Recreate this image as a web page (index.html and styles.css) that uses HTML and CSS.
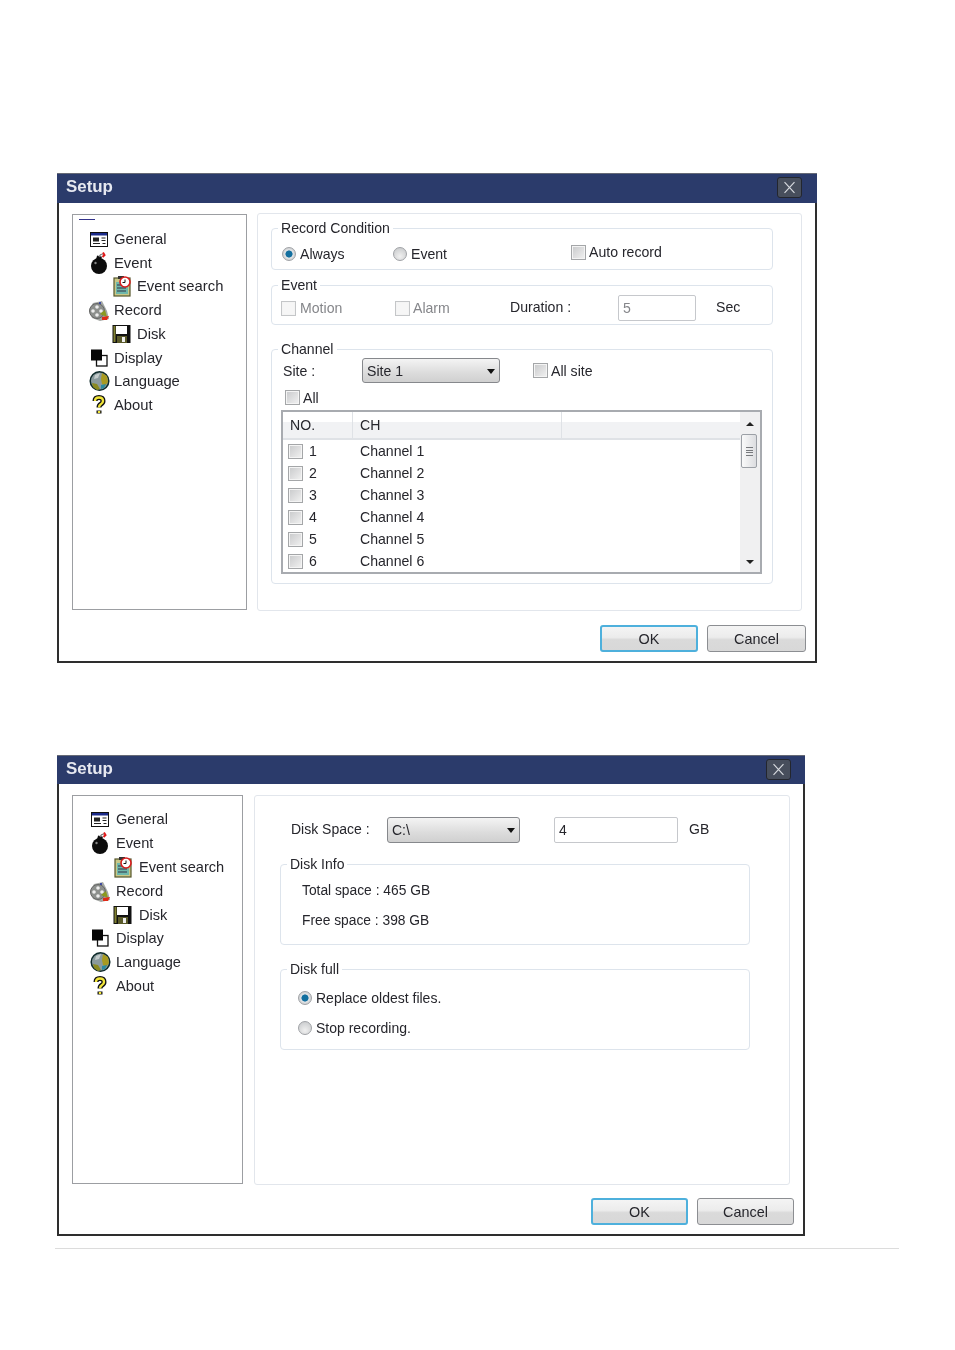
FILE: index.html
```html
<!DOCTYPE html>
<html lang="en">
<head>
<meta charset="utf-8">
<title>Setup</title>
<link rel="stylesheet" href="styles.css">
</head>
<body>
<svg class="defs" aria-hidden="true">
  <symbol id="i-general" viewBox="0 0 24 24">
    <rect x="3.5" y="5.5" width="17" height="14" fill="#fff" stroke="#111"/>
    <rect x="4" y="6" width="16" height="2.5" fill="#1a2a8a"/>
    <rect x="6" y="10.5" width="6" height="4" fill="#222"/>
    <path d="M6 16.5h7M14.5 11h4M14.5 13.5h4M15.5 16.5h3" stroke="#222" fill="none"/>
  </symbol>
  <symbol id="i-bomb" viewBox="0 0 24 24">
    <circle cx="12" cy="15" r="8" fill="#0c0c0c"/>
    <rect x="9.5" y="5" width="5" height="4" fill="#0c0c0c" transform="rotate(15 12 7)"/>
    <path d="M12 6q1-3 4-3" stroke="#777" stroke-width="1.2" fill="none"/>
    <path d="M16 1.5l1.5 2.5-2 2" stroke="#e01818" stroke-width="2" fill="none"/>
    <circle cx="8.5" cy="12" r="1.2" fill="#888"/>
  </symbol>
  <symbol id="i-search" viewBox="0 0 24 24">
    <rect x="4" y="4" width="16" height="18" fill="#c8c888" stroke="#55552a" stroke-width="1.2"/>
    <rect x="6" y="8" width="12" height="12" fill="#6fb8ac"/>
    <path d="M7 11h6M7 14h9M7 17h9" stroke="#334" fill="none"/>
    <rect x="8" y="2" width="6" height="3" fill="#333"/>
    <circle cx="15" cy="8" r="5" fill="#fff" stroke="#d81c1c" stroke-width="1.6"/>
    <path d="M15 5.5V8.5h-2.5" stroke="#111" fill="none"/>
  </symbol>
  <symbol id="i-record" viewBox="0 0 24 24">
    <path d="M6 5l9-2 5 10 2 8-9 2-8-3-3-8z" fill="#a4a8a4"/>
    <circle cx="10" cy="13" r="7.5" fill="#8d908d" stroke="#666"/>
    <circle cx="10" cy="9" r="1.8" fill="#eee"/>
    <circle cx="6" cy="13" r="1.8" fill="#eee"/>
    <circle cx="14" cy="13" r="1.8" fill="#eee"/>
    <circle cx="10" cy="17" r="1.8" fill="#eee"/>
    <circle cx="13" cy="5" r="1" fill="#2030a0"/>
    <path d="M13 16l5-4 2 7z" fill="#8a9a20"/>
    <path d="M15 19l7-1-2 4-5 0z" fill="#e02a18"/>
  </symbol>
  <symbol id="i-disk" viewBox="0 0 24 24">
    <rect x="2.5" y="3" width="18" height="18" fill="#111"/>
    <path d="M3.5 4h2v16h-2z" fill="#808030"/>
    <rect x="6" y="4" width="11" height="8" fill="#fff"/>
    <rect x="7" y="14" width="10" height="7" fill="#5a5a2a"/>
    <rect x="12" y="15" width="3" height="5" fill="#eee"/>
  </symbol>
  <symbol id="i-display" viewBox="0 0 24 24">
    <rect x="9.5" y="9.5" width="10.5" height="10.5" fill="#fff" stroke="#111" stroke-width="1.3"/>
    <rect x="4" y="3.5" width="11" height="11" fill="#060606"/>
  </symbol>
  <symbol id="i-language" viewBox="0 0 24 24">
    <circle cx="12.500" cy="12" r="9.300" fill="#8a9a9c" stroke="#0e2a2a" stroke-width="1.500"/>
    <path d="M15 4l5 3 1 6-3 4-3-2-1-5z" fill="#a89a20"/>
    <path d="M5 14l5 1 3 5-3 1-4-3z" fill="#8a8a20"/>
    <path d="M14 16l5-1-2 4-3 1z" fill="#2a8aa0"/>
    <path d="M8 6l5-2-2 5-4 1z" fill="#c4cccc"/>
  </symbol>
  <symbol id="i-about" viewBox="0 0 24 24">
    <path d="M8 8q0-3.500 4-3.500t4 3.500q0 2-2.200 3.200-1.800 1-1.800 3.300" fill="none" stroke="#111" stroke-width="5"/>
    <path d="M12 17.500v3" fill="none" stroke="#111" stroke-width="5"/>
    <path d="M8 8q0-3.500 4-3.500t4 3.500q0 2-2.200 3.200-1.800 1-1.800 3.300" fill="none" stroke="#f2e63a" stroke-width="2.400"/>
    <path d="M12 18v2" fill="none" stroke="#f2e63a" stroke-width="2.400"/>
  </symbol>
  <symbol id="i-close" viewBox="0 0 25 21">
    <path d="M7 4.500l11 12M18 4.500l-11 12" stroke="#d6d9de" stroke-width="1.300" fill="none"/>
  </symbol>
</svg>

<section class="win win-a">
  <header class="win-title">
    <h1 class="win-name">Setup</h1>
    <button class="win-close" type="button" aria-label="Close"><svg class="close-icon"><use href="#i-close"/></svg></button>
  </header>
  <div class="win-body">
    <div class="win-columns">
      <nav class="tree tree-a">
        <div class="tree-mark"></div>
        <div class="tree-row"><svg class="tree-icon"><use href="#i-general"/></svg>General</div>
        <div class="tree-row"><svg class="tree-icon"><use href="#i-bomb"/></svg>Event</div>
        <div class="tree-row tree-child"><svg class="tree-icon"><use href="#i-search"/></svg>Event search</div>
        <div class="tree-row"><svg class="tree-icon"><use href="#i-record"/></svg>Record</div>
        <div class="tree-row tree-child"><svg class="tree-icon"><use href="#i-disk"/></svg>Disk</div>
        <div class="tree-row"><svg class="tree-icon"><use href="#i-display"/></svg>Display</div>
        <div class="tree-row"><svg class="tree-icon"><use href="#i-language"/></svg>Language</div>
        <div class="tree-row"><svg class="tree-icon"><use href="#i-about"/></svg>About</div>
      </nav>
      <main class="panel panel-a">
        <fieldset class="group group-cond">
          <legend class="group-label">Record Condition</legend>
          <div class="opt-row">
            <label class="opt opt-always"><input class="radio" type="radio" name="cond" checked>Always</label>
            <label class="opt opt-event"><input class="radio" type="radio" name="cond">Event</label>
            <label class="opt opt-auto"><input class="check" type="checkbox">Auto record</label>
          </div>
        </fieldset>
        <fieldset class="group group-event">
          <legend class="group-label">Event</legend>
          <div class="opt-row">
            <label class="opt opt-motion muted"><input class="check check-off" type="checkbox" disabled>Motion</label>
            <label class="opt opt-alarm muted"><input class="check check-off" type="checkbox" disabled>Alarm</label>
            <span class="duration-label">Duration :</span>
            <input class="field field-duration" type="text" value="5" disabled>
            <span class="sec-label">Sec</span>
          </div>
        </fieldset>
        <fieldset class="group group-channel">
          <legend class="group-label">Channel</legend>
          <div class="site-row">
            <span class="site-label">Site :</span>
            <div class="select select-site">Site 1</div>
            <label class="opt opt-allsite"><input class="check" type="checkbox">All site</label>
          </div>
          <label class="opt opt-all"><input class="check" type="checkbox">All</label>
          <div class="table">
            <div class="table-main">
              <div class="table-head">
                <div class="head-no">NO.</div>
                <div class="head-ch">CH</div>
                <div class="head-rest"></div>
              </div>
              <div class="table-row"><label class="cell-no"><input class="check" type="checkbox">1</label><div class="cell-ch">Channel 1</div></div>
              <div class="table-row"><label class="cell-no"><input class="check" type="checkbox">2</label><div class="cell-ch">Channel 2</div></div>
              <div class="table-row"><label class="cell-no"><input class="check" type="checkbox">3</label><div class="cell-ch">Channel 3</div></div>
              <div class="table-row"><label class="cell-no"><input class="check" type="checkbox">4</label><div class="cell-ch">Channel 4</div></div>
              <div class="table-row"><label class="cell-no"><input class="check" type="checkbox">5</label><div class="cell-ch">Channel 5</div></div>
              <div class="table-row"><label class="cell-no"><input class="check" type="checkbox">6</label><div class="cell-ch">Channel 6</div></div>
            </div>
            <div class="scroll">
              <div class="scroll-btn"><span class="arrow-up"></span></div>
              <div class="scroll-thumb"><span class="grip"></span></div>
              <div class="scroll-track"></div>
              <div class="scroll-btn scroll-btn-end"><span class="arrow-down"></span></div>
            </div>
          </div>
        </fieldset>
      </main>
    </div>
    <footer class="win-foot">
      <button class="btn btn-primary btn-a" type="button">OK</button>
      <button class="btn btn-a btn-a-wide" type="button">Cancel</button>
    </footer>
  </div>
</section>

<section class="win win-b">
  <header class="win-title">
    <h1 class="win-name">Setup</h1>
    <button class="win-close" type="button" aria-label="Close"><svg class="close-icon"><use href="#i-close"/></svg></button>
  </header>
  <div class="win-body">
    <div class="win-columns">
      <nav class="tree tree-b">
        <div class="tree-row"><svg class="tree-icon"><use href="#i-general"/></svg>General</div>
        <div class="tree-row"><svg class="tree-icon"><use href="#i-bomb"/></svg>Event</div>
        <div class="tree-row tree-child"><svg class="tree-icon"><use href="#i-search"/></svg>Event search</div>
        <div class="tree-row"><svg class="tree-icon"><use href="#i-record"/></svg>Record</div>
        <div class="tree-row tree-child"><svg class="tree-icon"><use href="#i-disk"/></svg>Disk</div>
        <div class="tree-row"><svg class="tree-icon"><use href="#i-display"/></svg>Display</div>
        <div class="tree-row"><svg class="tree-icon"><use href="#i-language"/></svg>Language</div>
        <div class="tree-row"><svg class="tree-icon"><use href="#i-about"/></svg>About</div>
      </nav>
      <main class="panel panel-b">
        <div class="disk-row">
          <span class="disk-label">Disk Space :</span>
          <div class="select select-disk">C:\</div>
          <input class="field field-size" type="text" value="4">
          <span class="gb-label">GB</span>
        </div>
        <fieldset class="group group-info">
          <legend class="group-label">Disk Info</legend>
          <div class="info-line">Total space : 465 GB</div>
          <div class="info-line">Free space : 398 GB</div>
        </fieldset>
        <fieldset class="group group-full">
          <legend class="group-label">Disk full</legend>
          <label class="opt opt-full"><input class="radio" type="radio" name="full" checked>Replace oldest files.</label>
          <label class="opt opt-full"><input class="radio" type="radio" name="full">Stop recording.</label>
        </fieldset>
      </main>
    </div>
    <footer class="win-foot">
      <button class="btn btn-primary btn-b" type="button">OK</button>
      <button class="btn btn-b" type="button">Cancel</button>
    </footer>
  </div>
</section>

<div class="page-rule"></div>
</body>
</html>
```
FILE: styles.css
```css
* { box-sizing: border-box; }
html, body { margin: 0; padding: 0; background: #fff; }
body {
  padding-top: 173px;
  font-family: "Liberation Sans", Arial, sans-serif;
  font-size: 14.1px;
  color: #26262c;
}
.defs { position: absolute; width: 0; height: 0; }

/* window */
.win { margin-left: 57px; filter: blur(0.3px); }
.win-a { width: 760px; height: 490px; }
.win-b { width: 748px; height: 481px; margin-top: 92px; font-size: 14px; }
.win-title {
  display: flex;
  align-items: center;
  justify-content: space-between;
  padding: 0 15px 0 9px;
  background: #2b3b6b;
  border-top: 1px solid #666a76;
}
.win-a .win-title { height: 30px; }
.win-b .win-title { height: 29px; padding-right: 14px; }
.win-name { margin: -2px 0 0; font-size: 16.9px; line-height: 1; font-weight: bold; color: #e6e8f0; }
.win-close {
  width: 25px;
  height: 21px;
  margin-top: -2px;
  padding: 0;
  border: 1px solid #23262e;
  border-radius: 3px;
  background: #474e5c;
}
.close-icon { display: block; width: 23px; height: 19px; }
.win-body {
  border: solid #2e2e2e;
  border-width: 0 2px 2px;
  padding: 10px 13px 9px;
  background: #fff;
}
.win-a .win-body { height: 460px; }
.win-b .win-body { height: 452px; padding-top: 11px; }
.win-columns { display: flex; align-items: flex-start; }
.win-foot { display: flex; justify-content: flex-end; gap: 9px; margin-right: -4px; }
.win-a .win-foot { margin-top: 14px; }
.win-b .win-foot { margin-top: 13px; }

/* tree */
.tree { flex: none; border: 1px solid #9c9ea2; font-size: 14.8px; background: #fff; }
.tree-a { width: 175px; height: 396px; margin-top: 1px; margin-right: 10px; padding-top: 4px; }
.tree-b { width: 171px; height: 389px; margin-right: 11px; padding-top: 11px; font-size: 14.6px; }
.tree-mark { width: 16px; height: 1px; margin: 0 0 7px 6px; background: #33338a; }
.tree-row { display: flex; align-items: center; gap: 3px; height: 23.75px; padding-left: 14px; white-space: nowrap; }
.tree-b .tree-row { padding-left: 15px; height: 23.9px; gap: 4px; }
.tree-child { margin-left: 23px; }
.tree-icon { flex: none; display: block; width: 24px; height: 24px; }

/* panel */
.panel { flex: none; border: 1px solid #e2e6ec; border-radius: 3px; background: #fff; }
.panel-a { width: 545px; height: 398px; padding: 6px 0 0 13px; }
.panel-b { width: 536px; height: 390px; padding: 21px 0 0 25px; }

/* groups */
.group {
  margin: 0;
  padding: 0 6px;
  min-width: 0;
  border: 1px solid #dde4ec;
  border-radius: 4px;
}
.group-label { padding: 0 3px; line-height: 16px; }
.group-cond, .group-event, .group-channel { width: 502px; }
.group-cond { height: 50px; }
.group-event { height: 48px; margin-top: 7px; }
.group-event .opt-row { margin-top: -1px; }
.group-channel { height: 243px; margin-top: 16px; }
.group-info, .group-full { width: 470px; }
.group-info { height: 89px; margin-top: 13px; padding-top: 4px; }
.group-full { height: 89px; margin-top: 16px; padding-top: 6px; }

/* options */
.opt-row { display: flex; align-items: center; height: 32px; }
.opt { display: flex; align-items: center; gap: 4px; white-space: nowrap; }
.muted { color: #85868a; }
.opt-always { width: 111px; margin: 4px 0 0 4px; }
.opt-event { width: 178px; margin-top: 4px; }
.opt-auto { gap: 3px; }
.opt-motion { width: 114px; margin-left: 3px; }
.opt-alarm { width: 115px; gap: 3px; }
.duration-label { width: 108px; margin-top: -2px; }
.field {
  height: 26px;
  padding: 0 4px;
  border: 1px solid #c6c8cc;
  border-radius: 2px;
  font: inherit;
  color: #26262c;
  background: #fff;
}
.field-duration { width: 78px; color: #85868a; }
.sec-label { margin: -2px 0 0 20px; }
.radio, .check { flex: none; appearance: none; -webkit-appearance: none; margin: 0; }
.radio {
  width: 14px;
  height: 14px;
  border: 1px solid #a0a2a6;
  border-radius: 50%;
  background: radial-gradient(circle at 50% 70%, #f0f0f0, #c4c6c8);
}
.radio:checked { background: radial-gradient(circle, #136f9f 0, #136f9f 3.2px, #e4e6e8 3.9px, #b4b6b8 100%); }
.check {
  width: 15px;
  height: 15px;
  border: 1px solid #a4a6a8;
  background: linear-gradient(135deg, #c8c9cb, #f2f2f2);
  box-shadow: inset 0 0 0 1px #f4f4f4;
}
.check-off { background: #f6f6f6; border-color: #c4c6c8; }

/* channel */
.site-row { display: flex; align-items: center; height: 27px; }
.site-label { width: 79px; margin-left: 5px; }
.select {
  position: relative;
  height: 26px;
  padding-left: 4px;
  line-height: 24px;
  border: 1px solid #86888c;
  border-radius: 3px;
  background: linear-gradient(#f4f4f4, #dcdcdc 60%, #d0d0d0);
}
.select::after {
  content: "";
  position: absolute;
  right: 4px;
  top: 10px;
  border: solid transparent;
  border-width: 5px 4.500px 0;
  border-top-color: #111;
}
.select-site { width: 138px; height: 25px; }
.opt-allsite { margin-left: 33px; gap: 3px; }
.opt-all { margin: 5px 0 0 7px; height: 17px; gap: 3px; }
.table {
  display: flex;
  width: 481px;
  height: 164px;
  margin: 4px 0 0 3px;
  border: 2px solid #a8abb0;
  overflow: hidden;
}
.table-main { flex: 1; min-width: 0; }
.table-head {
  display: flex;
  height: 28px;
  line-height: 26px;
  border-bottom: 2px solid #dfe2e6;
  background: linear-gradient(#fff 40%, #f1f2f4 40%);
}
.head-no { width: 70px; padding-left: 7px; border-right: 1px solid #dfe2e6; }
.head-ch { width: 209px; padding-left: 7px; border-right: 1px solid #dfe2e6; }
.head-rest { flex: 1; }
.table-row { display: flex; align-items: center; height: 22px; }
.cell-no { display: flex; align-items: center; gap: 6px; width: 69px; padding-left: 5px; }
.cell-ch { padding-left: 8px; }
.scroll { display: flex; flex-direction: column; flex: none; width: 20px; background: #f0f0f1; }
.scroll-btn { display: flex; align-items: center; justify-content: center; height: 22px; padding-top: 2px; }
.scroll-btn-end { height: 20px; padding-top: 0; }
.arrow-up, .arrow-down { border: solid transparent; border-width: 0 4px; }
.arrow-up { border-bottom: 4px solid #222; }
.arrow-down { border-top: 4px solid #222; border-width: 4px 4px 0; }
.scroll-thumb {
  display: flex;
  align-items: center;
  justify-content: center;
  width: 16px;
  height: 34px;
  margin-left: 1px;
  border: 1px solid #9ca0a6;
  border-radius: 2px;
  background: linear-gradient(90deg, #fafafa, #dcdde0);
}
.grip {
  width: 7px;
  height: 9px;
  background: repeating-linear-gradient(#77797d 0 1px, transparent 1px 2.600px);
}
.scroll-track { flex: 1; }

/* disk */
.disk-row { display: flex; align-items: center; height: 26px; padding-left: 11px; }
.disk-label { width: 96px; margin-top: -2px; }
.select-disk { width: 133px; }
.field-size { width: 124px; margin-left: 34px; }
.gb-label { margin: -2px 0 0 11px; }
.info-line { height: 30px; padding-left: 15px; line-height: 30px; font-size: 13.8px; }
.opt-full { height: 30px; margin-left: 11px; }

/* buttons */
.btn {
  height: 27px;
  padding: 0;
  border: 1px solid #8c8e92;
  border-radius: 3px;
  font: inherit;
  font-size: 14.4px;
  color: #26262c;
  background: linear-gradient(#f4f4f4, #ececec 45%, #dadada 55%, #d8d8d8);
}
.btn-primary { border: 2px solid #4eb0dc; }
.btn-a { width: 98px; }
.btn-a-wide { width: 99px; }
.btn-b { width: 97px; }

.page-rule { width: 844px; height: 1px; margin: 12px 0 0 55px; background: #dcdcdc; }
```
